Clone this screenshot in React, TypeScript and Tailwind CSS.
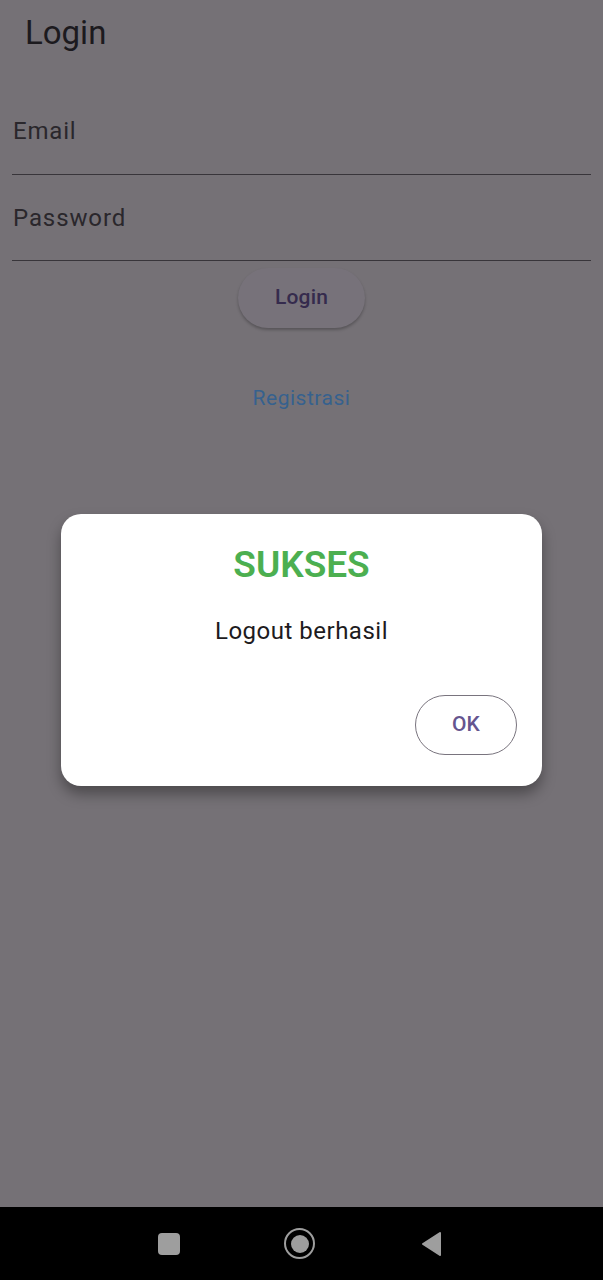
export default function App() {
  return (
    <div className="relative flex h-[1280px] w-[603px] flex-col overflow-hidden bg-[#757176] font-['Roboto',sans-serif]">
      <div className="flex-1">
        <div className="flex h-[66px] items-center px-[25px] pb-[2px]">
          <h1 className="text-[33px] leading-none text-[#1c1a1e]">Login</h1>
        </div>

        <div className="flex flex-col px-[12px] pt-[40px]">
          <div className="flex h-[69px] items-start border-b-[1.5px] border-[#38353a] pl-[1px] pt-[13px]">
            <span className="text-[24px] leading-none tracking-[0.8px] text-[#2a272c]">Email</span>
          </div>
          <div className="flex h-[86px] items-start border-b-[1.5px] border-[#38353a] pl-[1px] pt-[31px]">
            <span className="text-[24px] leading-none tracking-[0.9px] text-[#2a272c]">Password</span>
          </div>
        </div>

        <div className="flex justify-center pt-[7px]">
          <div className="flex h-[60px] w-[127px] items-center justify-center rounded-full bg-[#77727a] shadow-[0_2px_3px_rgba(0,0,0,0.25)]">
            <span className="text-[21px] font-medium tracking-[0.2px] text-[#352b4d]">Login</span>
          </div>
        </div>

        <div className="flex justify-center pt-[55px]">
          <span className="text-[21px] tracking-[0.5px] text-[#36618e]">Registrasi</span>
        </div>
      </div>

      <div className="flex h-[73px] items-center justify-center bg-black">
        <div className="flex w-[300px] items-center justify-between pl-[6px] pr-[10px]">
          <div className="h-[22px] w-[22px] rounded-[4px] bg-[#9e9e9e]" />
          <div className="flex h-[31px] w-[31px] items-center justify-center rounded-full border-[2.5px] border-[#9e9e9e]">
            <div className="h-[18px] w-[18px] rounded-full bg-[#9e9e9e]" />
          </div>
          <svg width="22" height="26" viewBox="0 0 22 26">
            <path d="M20 2 L3 13 L20 24 Z" fill="#9e9e9e" stroke="#9e9e9e" strokeWidth="2" strokeLinejoin="round" />
          </svg>
        </div>
      </div>

      <div className="absolute left-[61px] top-[514px] flex w-[481px] flex-col rounded-[20px] bg-white shadow-[0_8px_14px_rgba(0,0,0,0.35)]">
        <div className="flex justify-center pt-[25px]">
          <span className="text-[37px] font-semibold leading-[52px] text-[#4caf50]">SUKSES</span>
        </div>
        <div className="flex justify-center pt-[24px]">
          <span className="text-[24px] leading-[32px] tracking-[0.5px] text-[#1d1b20]">Logout berhasil</span>
        </div>
        <div className="flex justify-end px-[25px] pb-[31px] pt-[48px]">
          <div className="flex h-[60px] w-[102px] items-center justify-center rounded-full border-[1.5px] border-[#79747e]">
            <span className="text-[21px] font-medium tracking-[0.2px] text-[#65558f]">OK</span>
          </div>
        </div>
      </div>
    </div>
  );
}
